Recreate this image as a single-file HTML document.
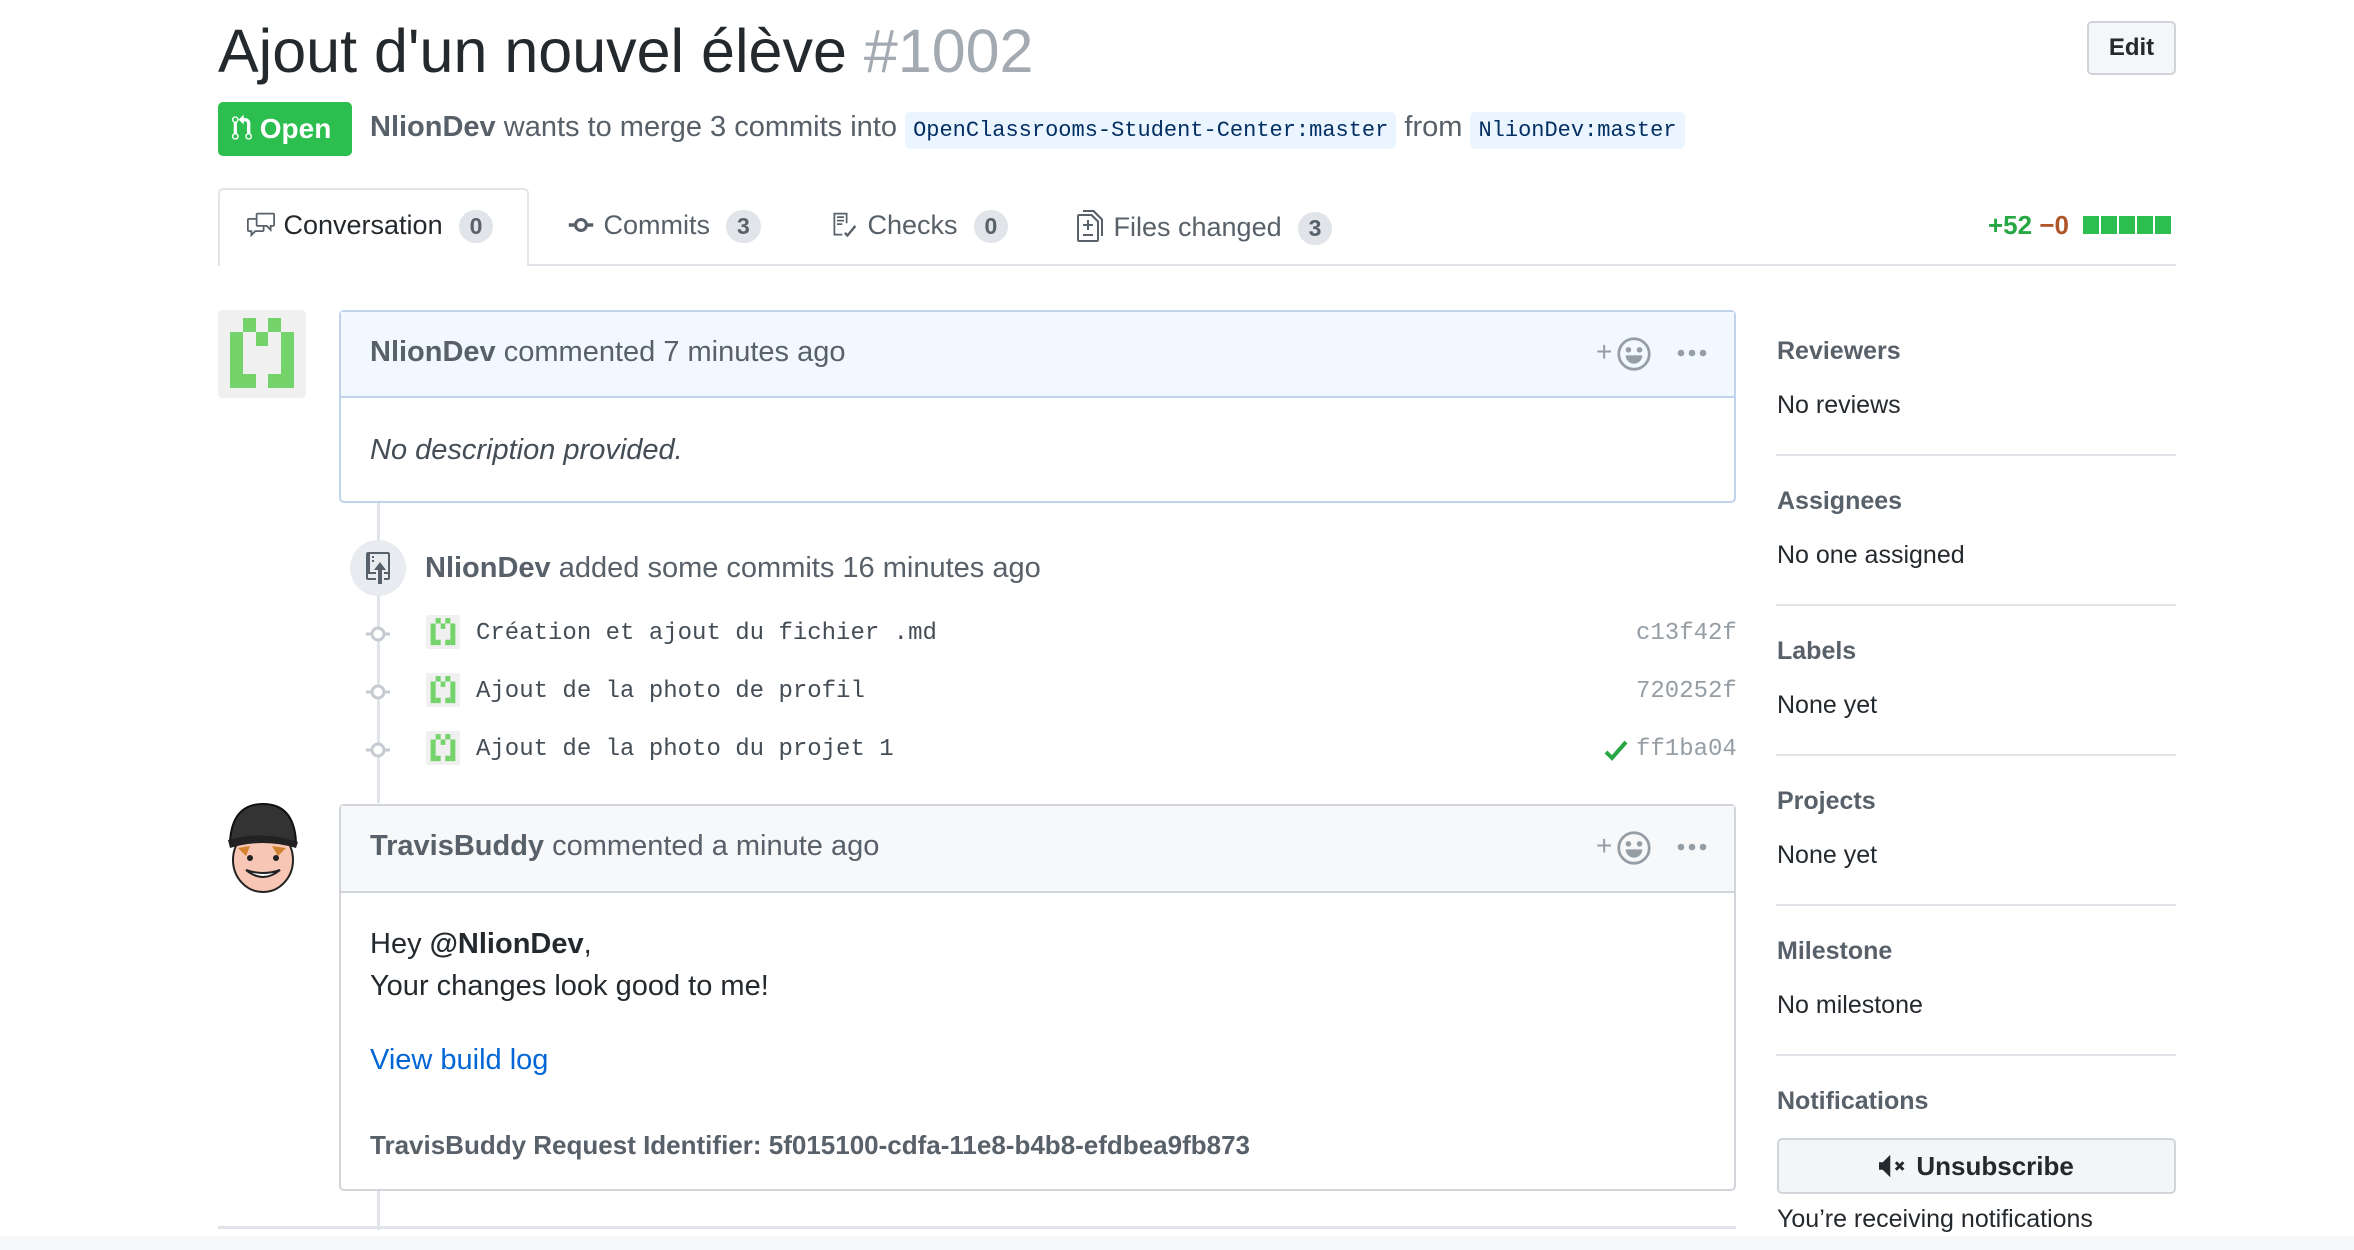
<!DOCTYPE html>
<html><head><meta charset="utf-8"><style>
*{box-sizing:border-box;margin:0;padding:0}
body{width:2354px;height:1250px;overflow:hidden;background:#fff;font-family:"Liberation Sans",Arial,sans-serif;color:#24292e;position:relative}
.a{position:absolute;white-space:nowrap}
.mono{font-family:"Liberation Mono",monospace}
.cnt{display:inline-block;background:#e1e4e8;color:#586069;border-radius:20px;font-size:23px;font-weight:bold;padding:3px 11px;margin-left:16px;vertical-align:middle}
.tab{font-size:27px;color:#586069}
.sh{font-size:25px;font-weight:bold;color:#586069}
.sv{font-size:25px;color:#24292e}
.hr{position:absolute;left:1776px;width:400px;height:2px;background:#e1e4e8}
.branch{background:#eaf5ff;color:#032f62;border-radius:5px;padding:6px 8px;font-size:22px}
</style></head><body>
<div class="a" style="left:218px;top:16px;font-size:61px;color:#24292e">Ajout d'un nouvel élève <span style="color:#a3aab1">#1002</span></div>
<div class="a" style="left:2087px;top:21px;width:89px;height:54px;border:2px solid #d1d5da;border-radius:5px;background:#f4f6f8;font-size:24px;font-weight:bold;text-align:center;line-height:50px">Edit</div>
<div class="a" style="left:218px;top:102px;width:134px;height:54px;background:#2cbe4e;border-radius:5px;color:#fff;font-size:28px;font-weight:bold;line-height:54px;padding-left:14px">
<svg width="20" height="28" viewBox="0 0 12 16" style="vertical-align:-4px"><path fill="#fff" d="M11 11.28V5c-.03-.78-.34-1.470-.94-2.06C9.46 2.35 8.78 2.03 8 2H7V0L4 3l3 3V4h1c.27.02.48.11.69.31.21.2.3.42.31.69v6.28A1.993 1.993 0 0 0 10 15a1.993 1.993 0 0 0 1-3.72zm-1 2.92c-.66 0-1.2-.55-1.2-1.2 0-.65.55-1.2 1.2-1.2.65 0 1.2.55 1.2 1.2 0 .65-.55 1.2-1.2 1.2zM4 3c0-1.11-.89-2-2-2a1.993 1.993 0 0 0-1 3.72v6.56A1.993 1.993 0 0 0 2 15a1.993 1.993 0 0 0 1-3.72V4.72c.59-.34 1-.98 1-1.720zm-.8 10c0 .66-.55 1.2-1.2 1.2-.65 0-1.2-.55-1.2-1.2 0-.65.55-1.2 1.2-1.2.65 0 1.2.55 1.2 1.2zM2 4.2C1.34 4.2.8 3.65.8 3c0-.65.55-1.2 1.2-1.2.65 0 1.2.55 1.2 1.2 0 .65-.55 1.2-1.2 1.2z"/></svg> Open</div>
<div class="a" style="left:370px;top:108px;font-size:29px;color:#586069;line-height:38px"><b style="color:#586069">NlionDev</b> wants to merge 3 commits into <span class="branch mono">OpenClassrooms-Student-Center:master</span> from <span class="branch mono">NlionDev:master</span></div>

<!-- tabs -->
<div class="a" style="left:218px;top:264px;width:1958px;height:2px;background:#e1e4e8"></div>
<div class="a" style="left:218px;top:188px;width:311px;height:78px;border:2px solid #e1e4e8;border-bottom:none;border-radius:5px 5px 0 0;background:#fff"></div>
<div class="a tab" style="left:246px;top:210px;color:#24292e"><svg width="30" height="28" viewBox="0 0 16 16" style="vertical-align:-5px"><path fill="#586069" d="M15 1H6c-.55 0-1 .45-1 1v2H1c-.55 0-1 .45-1 1v6c0 .55.45 1 1 1h1v3l3-3h4c.55 0 1-.45 1-1V9h1l3 3V9h1c.55 0 1-.45 1-1V2c0-.55-.45-1-1-1zM9 11H4.5L3 12.5V11H1V5h4v3c0 .55.45 1 1 1h3v2zm6-3h-2v1.5L11.5 8H6V2h9v6z"/></svg> Conversation<span class="cnt">0</span></div>
<div class="a tab" style="left:566px;top:210px"><svg width="30" height="28" viewBox="0 0 14 16" style="vertical-align:-5px"><path fill="#586069" d="M10.86 7c-.45-1.72-2-3-3.860-3-1.86 0-3.41 1.28-3.86 3H0v2h3.14c.45 1.72 2 3 3.86 3 1.86 0 3.41-1.28 3.86-3H14V7h-3.14zM7 10.2c-1.22 0-2.2-.98-2.2-2.2 0-1.22.98-2.2 2.2-2.2 1.22 0 2.2.98 2.2 2.2 0 1.22-.98 2.2-2.2 2.2z"/></svg> Commits<span class="cnt">3</span></div>
<div class="a tab" style="left:828px;top:210px"><svg width="32" height="28" viewBox="0 0 16 16" style="vertical-align:-5px"><path fill="#586069" d="M2 1h8v6H9V2H3v11h4v1H2V1zm2 2h4v1H4V3zm0 2h4v1H4V5zm0 2h3v1H4V7zm4 6l2 2 5-6-1-1-4 5-1-1-1 1z"/></svg> Checks<span class="cnt">0</span></div>
<div class="a tab" style="left:1076px;top:210px"><svg width="30" height="32" viewBox="0 0 14 16" style="vertical-align:-6px"><path fill="#586069" d="M6 7h2v1H6v2H5V8H3V7h2V5h1v2zm-3 6h5v-1H3v1zM7.5 2L11 5.5V15c0 .55-.45 1-1 1H1c-.55 0-1-.45-1-1V3c0-.55.45-1 1-1h6.5zM10 6L7 3H1v12h9V6zM8.5 0H3v1h5l4 4v8h1V4.5L8.5 0z"/></svg> Files changed<span class="cnt">3</span></div>
<div class="a" style="left:1988px;top:210px;font-size:26px;font-weight:bold"><span style="color:#28a745">+52</span> <span style="color:#b0542a">−0</span></div>
<div class="a" style="left:2083px;top:216px">
<span style="display:inline-block;width:16px;height:18px;background:#2cbe4e;margin-right:2px"></span><span style="display:inline-block;width:16px;height:18px;background:#2cbe4e;margin-right:2px"></span><span style="display:inline-block;width:16px;height:18px;background:#2cbe4e;margin-right:2px"></span><span style="display:inline-block;width:16px;height:18px;background:#2cbe4e;margin-right:2px"></span><span style="display:inline-block;width:16px;height:18px;background:#2cbe4e"></span></div>

<!-- timeline line -->
<div class="a" style="left:377px;top:503px;width:3px;height:300px;background:#e1e4e8"></div>
<div class="a" style="left:377px;top:1190px;width:3px;height:40px;background:#e1e4e8"></div>

<!-- avatar 1 -->
<svg class="a" style="left:218px;top:310px" width="88" height="88" viewBox="0 0 88 88"><rect width="88" height="88" rx="4" fill="#f0f0f0"/><g fill="#74d36a"><rect x="12" y="22" width="13" height="56"/><rect x="63" y="22" width="13" height="56"/><rect x="25" y="8" width="13" height="14"/><rect x="50" y="8" width="13" height="14"/><rect x="38" y="22" width="12" height="14"/><rect x="25" y="64" width="13" height="14"/><rect x="50" y="64" width="13" height="14"/></g></svg>
<!-- comment 1 -->
<div class="a" style="left:339px;top:310px;width:1397px;height:193px;border:2px solid #c0d3eb;border-radius:5px;background:#fff"></div>
<div class="a" style="left:341px;top:312px;width:1393px;height:86px;background:#f1f8ff;border-bottom:2px solid #c0d3eb"></div>
<div class="a" style="left:370px;top:336px;font-size:29px;color:#586069"><b>NlionDev</b> commented 7 minutes ago</div>
<div class="a" style="left:370px;top:434px;font-size:29px;font-style:italic;color:#444d56">No description provided.</div>
<div class="a" style="left:1596px;top:336px;font-size:28px;color:#959da5">+</div>
<svg class="a" style="left:1616px;top:336px" width="36" height="36" viewBox="0 0 26 26"><circle cx="13" cy="13" r="11" fill="none" stroke="#959da5" stroke-width="2"/><circle cx="9" cy="10" r="2" fill="#959da5"/><circle cx="17" cy="10" r="2" fill="#959da5"/><path d="M7 14h12a6 6 0 0 1-12 0z" fill="#959da5"/></svg>
<svg class="a" style="left:1677px;top:347px" width="30" height="12"><circle cx="4" cy="6" r="3.3" fill="#959da5"/><circle cx="15" cy="6" r="3.3" fill="#959da5"/><circle cx="26" cy="6" r="3.3" fill="#959da5"/></svg>

<!-- commits event -->
<div class="a" style="left:350px;top:540px;width:56px;height:56px;border-radius:50%;background:#e8ebef"></div>
<svg class="a" style="left:365px;top:552px" width="26" height="32" viewBox="0 0 12 16"><path fill="#586069" d="M4 3H3V2h1v1zM3 5h1V4H3v1zm4 0L4 9h2v7h2V9h2L7 5zm4-5H1C.45 0 0 .45 0 1v12c0 .55.45 1 1 1h4v-1H1v-2h4v-1H2V1h9.02L11 10H9v1h2v2H9v1h2c.55 0 1-.45 1-1V1c0-.55-.45-1-1-1z"/></svg>
<div class="a" style="left:425px;top:552px;font-size:29px;color:#586069"><b>NlionDev</b> added some commits 16 minutes ago</div>

<!-- commit rows -->
<div class="a" style="left:366px;top:622px;width:24px;height:24px"><svg width="24" height="24"><line x1="0" y1="12" x2="24" y2="12" stroke="#c6cbd1" stroke-width="3"/><circle cx="12" cy="12" r="6" fill="#fff" stroke="#c6cbd1" stroke-width="3"/></svg></div>
<div class="a" style="left:366px;top:680px;width:24px;height:24px"><svg width="24" height="24"><line x1="0" y1="12" x2="24" y2="12" stroke="#c6cbd1" stroke-width="3"/><circle cx="12" cy="12" r="6" fill="#fff" stroke="#c6cbd1" stroke-width="3"/></svg></div>
<div class="a" style="left:366px;top:738px;width:24px;height:24px"><svg width="24" height="24"><line x1="0" y1="12" x2="24" y2="12" stroke="#c6cbd1" stroke-width="3"/><circle cx="12" cy="12" r="6" fill="#fff" stroke="#c6cbd1" stroke-width="3"/></svg></div>

<svg class="a" style="left:426px;top:614px" width="34" height="36" viewBox="0 0 88 88"><rect width="88" height="88" rx="4" fill="#f0f0f0"/><g fill="#74d36a"><rect x="12" y="22" width="13" height="56"/><rect x="63" y="22" width="13" height="56"/><rect x="25" y="8" width="13" height="14"/><rect x="50" y="8" width="13" height="14"/><rect x="38" y="22" width="12" height="14"/><rect x="25" y="64" width="13" height="14"/><rect x="50" y="64" width="13" height="14"/></g></svg>
<svg class="a" style="left:426px;top:672px" width="34" height="36" viewBox="0 0 88 88"><rect width="88" height="88" rx="4" fill="#f0f0f0"/><g fill="#74d36a"><rect x="12" y="22" width="13" height="56"/><rect x="63" y="22" width="13" height="56"/><rect x="25" y="8" width="13" height="14"/><rect x="50" y="8" width="13" height="14"/><rect x="38" y="22" width="12" height="14"/><rect x="25" y="64" width="13" height="14"/><rect x="50" y="64" width="13" height="14"/></g></svg>
<svg class="a" style="left:426px;top:730px" width="34" height="36" viewBox="0 0 88 88"><rect width="88" height="88" rx="4" fill="#f0f0f0"/><g fill="#74d36a"><rect x="12" y="22" width="13" height="56"/><rect x="63" y="22" width="13" height="56"/><rect x="25" y="8" width="13" height="14"/><rect x="50" y="8" width="13" height="14"/><rect x="38" y="22" width="12" height="14"/><rect x="25" y="64" width="13" height="14"/><rect x="50" y="64" width="13" height="14"/></g></svg>
<div class="a mono" style="left:476px;top:620px;font-size:24px;color:#444d56">Création et ajout du fichier .md</div>
<div class="a mono" style="left:476px;top:678px;font-size:24px;color:#444d56">Ajout de la photo de profil</div>
<div class="a mono" style="left:476px;top:736px;font-size:24px;color:#444d56">Ajout de la photo du projet 1</div>
<div class="a mono" style="left:1636px;top:620px;font-size:24px;color:#959da5">c13f42f</div>
<div class="a mono" style="left:1636px;top:678px;font-size:24px;color:#959da5">720252f</div>
<div class="a mono" style="left:1636px;top:736px;font-size:24px;color:#959da5">ff1ba04</div>
<svg class="a" style="left:1604px;top:740px" width="24" height="22" viewBox="0 0 12 11"><path d="M1 6l3 3 7-8" fill="none" stroke="#28a745" stroke-width="2"/></svg>

<!-- avatar 2 -->
<svg class="a" style="left:220px;top:802px" width="86" height="92" viewBox="0 0 86 92">
<ellipse cx="43" cy="58" rx="30" ry="32" fill="#f7c6b4" stroke="#222" stroke-width="2"/>
<path d="M10 40 Q12 2 43 2 Q74 2 76 40 Z" fill="#333" stroke="#111" stroke-width="2"/>
<path d="M8 38 Q43 28 78 40 L76 46 Q43 36 10 46 Z" fill="#222"/>
<path d="M18 46 L30 44 L26 54 Z M52 44 L66 46 L58 54Z" fill="#d2822e"/>
<path d="M26 68 Q43 82 60 68 Q43 74 26 68Z" fill="#fff" stroke="#222" stroke-width="2"/>
<circle cx="30" cy="56" r="3" fill="#222"/><circle cx="56" cy="56" r="3" fill="#222"/>
</svg>
<!-- comment 2 -->
<div class="a" style="left:339px;top:804px;width:1397px;height:387px;border:2px solid #d1d5da;border-radius:5px;background:#fff"></div>
<div class="a" style="left:341px;top:806px;width:1393px;height:87px;background:#f6f8fa;border-bottom:2px solid #d1d5da"></div>
<div class="a" style="left:370px;top:830px;font-size:29px;color:#586069"><b>TravisBuddy</b> commented a minute ago</div>
<div class="a" style="left:1596px;top:830px;font-size:28px;color:#959da5">+</div>
<svg class="a" style="left:1616px;top:830px" width="36" height="36" viewBox="0 0 26 26"><circle cx="13" cy="13" r="11" fill="none" stroke="#959da5" stroke-width="2"/><circle cx="9" cy="10" r="2" fill="#959da5"/><circle cx="17" cy="10" r="2" fill="#959da5"/><path d="M7 14h12a6 6 0 0 1-12 0z" fill="#959da5"/></svg>
<svg class="a" style="left:1677px;top:841px" width="30" height="12"><circle cx="4" cy="6" r="3.3" fill="#959da5"/><circle cx="15" cy="6" r="3.3" fill="#959da5"/><circle cx="26" cy="6" r="3.3" fill="#959da5"/></svg>
<div class="a" style="left:370px;top:928px;font-size:29px;color:#24292e">Hey <b>@NlionDev</b>,</div>
<div class="a" style="left:370px;top:970px;font-size:29px;color:#24292e">Your changes look good to me!</div>
<div class="a" style="left:370px;top:1044px;font-size:29px;color:#0366d6">View build log</div>
<div class="a" style="left:370px;top:1130px;font-size:26px;font-weight:bold;color:#586069">TravisBuddy Request Identifier: 5f015100-cdfa-11e8-b4b8-efdbea9fb873</div>

<div class="a" style="left:218px;top:1226px;width:1518px;height:3px;background:#e1e4e8"></div>
<div class="a" style="left:0;top:1236px;width:2354px;height:14px;background:#f6f8fa"></div>

<!-- sidebar -->
<div class="a sh" style="left:1777px;top:337px">Reviewers</div>
<div class="a sv" style="left:1777px;top:391px">No reviews</div>
<div class="hr" style="top:454px"></div>
<div class="a sh" style="left:1777px;top:487px">Assignees</div>
<div class="a sv" style="left:1777px;top:541px">No one assigned</div>
<div class="hr" style="top:604px"></div>
<div class="a sh" style="left:1777px;top:637px">Labels</div>
<div class="a sv" style="left:1777px;top:691px">None yet</div>
<div class="hr" style="top:754px"></div>
<div class="a sh" style="left:1777px;top:787px">Projects</div>
<div class="a sv" style="left:1777px;top:841px">None yet</div>
<div class="hr" style="top:904px"></div>
<div class="a sh" style="left:1777px;top:937px">Milestone</div>
<div class="a sv" style="left:1777px;top:991px">No milestone</div>
<div class="hr" style="top:1054px"></div>
<div class="a sh" style="left:1777px;top:1087px">Notifications</div>
<div class="a" style="left:1777px;top:1138px;width:399px;height:56px;border:2px solid #d1d5da;border-radius:5px;background:#f3f5f7;text-align:center;font-size:26px;font-weight:bold;line-height:52px;color:#24292e"><svg width="30" height="24" viewBox="0 0 16 12" style="vertical-align:-3px"><path fill="#24292e" d="M0 4h2l4-4v12L2 8H0z"/><path d="M9 4l4 4M13 4l-4 4" stroke="#24292e" stroke-width="1.6"/></svg> Unsubscribe</div>
<div class="a sv" style="left:1777px;top:1205px">You’re receiving notifications</div>
</body></html>
